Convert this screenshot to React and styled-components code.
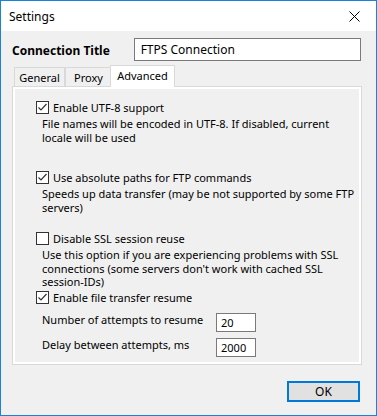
import styled, { createGlobalStyle } from "styled-components";

const GlobalStyle = createGlobalStyle`
  html, body {
    margin: 0;
    padding: 0;
    background: #ffffff;
  }
  * {
    box-sizing: border-box;
  }
`;

const font = `"Noto Sans", "Open Sans", sans-serif`;

const CheckMark = () => (
  <svg width="11" height="11" viewBox="0 0 11 11">
    <path d="M1.5 5.5 L4 8 L9.5 2" fill="none" stroke="#333" strokeWidth="1.2" />
  </svg>
);

const CloseIcon = () => (
  <svg width="11" height="11" viewBox="0 0 11 11">
    <path d="M0.5 0.5 L10.5 10.5 M10.5 0.5 L0.5 10.5" stroke="#000" strokeWidth="1" />
  </svg>
);

const Option = ({ checked, label, children, spacing }) => (
  <OptionBlock spacing={spacing}>
    <CheckRow>
      <CheckBox>{checked && <CheckMark />}</CheckBox>
      <span>{label}</span>
    </CheckRow>
    {children && <Desc>{children}</Desc>}
  </OptionBlock>
);

const App = () => {
  return (
    <>
      <GlobalStyle />
      <Window>
        <TitleBar>
          <Title>Settings</Title>
          <CloseButton>
            <CloseIcon />
          </CloseButton>
        </TitleBar>
        <Body>
          <HeaderRow>
            <HeaderLabel>Connection Title</HeaderLabel>
            <TitleInput defaultValue="FTPS Connection" />
          </HeaderRow>
          <Tabs>
            <Tab w={51}>General</Tab>
            <Tab w={47}>Proxy</Tab>
            <Tab w={65} active>
              Advanced
            </Tab>
          </Tabs>
          <Panel>
            <Option checked label="Enable UTF-8 support" spacing={0}>
              File names will be encoded in UTF-8. If disabled, current
              <br />
              locale will be used
            </Option>
            <Option checked label="Use absolute paths for FTP commands" spacing={26}>
              Speeds up data transfer (may be not supported by some FTP
              <br />
              servers)
            </Option>
            <Option label="Disable SSL session reuse" spacing={17}>
              Use this option if you are experiencing problems with SSL
              <br />
              connections (some servers don't work with cached SSL
              <br />
              session-IDs)
            </Option>
            <Option checked label="Enable file transfer resume" spacing={2} />
            <FieldRow spacing={8}>
              <FieldLabel>Number of attempts to resume</FieldLabel>
              <SmallInput defaultValue="20" />
            </FieldRow>
            <FieldRow spacing={6}>
              <FieldLabel>Delay between attempts, ms</FieldLabel>
              <SmallInput defaultValue="2000" />
            </FieldRow>
          </Panel>
          <Footer>
            <OkButton>OK</OkButton>
          </Footer>
        </Body>
      </Window>
    </>
  );
};

const Window = styled.div`
  width: 377px;
  height: 416px;
  border: 1px solid #1883d7;
  background: #f0f0f0;
  display: flex;
  flex-direction: column;
  font-family: ${font};
  font-size: 11px;
  color: #000;
`;

const TitleBar = styled.div`
  height: 30px;
  background: #ffffff;
  display: flex;
  align-items: center;
  padding-left: 8px;
`;

const Title = styled.div`
  font-size: 12px;
`;

const CloseButton = styled.div`
  margin-left: auto;
  width: 46px;
  height: 30px;
  display: flex;
  align-items: center;
  justify-content: center;
  padding-left: 2px;
`;

const Body = styled.div`
  flex: 1;
  padding: 7px 15px 0 11px;
  display: flex;
  flex-direction: column;
`;

const HeaderRow = styled.div`
  display: flex;
  align-items: center;
  height: 23px;
`;

const HeaderLabel = styled.div`
  width: 122px;
  font-weight: bold;
  font-size: 12px;
  padding-top: 2px;
`;

const TitleInput = styled.input`
  width: 228px;
  height: 23px;
  border: 1px solid #7a7a7a;
  background: #fff;
  padding: 0 6px;
  font-family: ${font};
  font-size: 12px;
  color: #000;
  outline: none;
`;

const Tabs = styled.div`
  display: flex;
  align-items: flex-end;
  height: 22px;
  margin-top: 4px;
  padding-left: 2px;
  margin-bottom: -1px;
  position: relative;
  z-index: 1;
`;

const Tab = styled.div`
  width: ${(p) => p.w}px;
  height: ${(p) => (p.active ? 22 : 20)}px;
  margin-left: ${(p) => (p.active ? -2 : 0)}px;
  border: 1px solid #d9d9d9;
  border-bottom: ${(p) => (p.active ? "none" : "1px solid #d9d9d9")};
  background: ${(p) => (p.active ? "#ffffff" : "#f0f0f0")};
  display: flex;
  align-items: center;
  justify-content: center;
  padding-bottom: ${(p) => (p.active ? 2 : 0)}px;
  & + & {
    border-left: ${(p) => (p.active ? "1px solid #d9d9d9" : "none")};
  }
`;

const Panel = styled.div`
  width: 350px;
  height: 279px;
  border: 1px solid #d9d9d9;
  box-shadow: inset 0 0 0 2px #ffffff;
  background: #f0f0f0;
  padding: 13px 16px 9px 23px;
  display: flex;
  flex-direction: column;
`;

const OptionBlock = styled.div`
  margin-top: ${(p) => p.spacing}px;
`;

const CheckRow = styled.div`
  display: flex;
  align-items: center;
  height: 14px;
  gap: 4px;
  white-space: nowrap;
`;

const CheckBox = styled.div`
  width: 13px;
  height: 13px;
  border: 1px solid #333;
  background: #fff;
  display: flex;
  align-items: center;
  justify-content: center;
`;

const Desc = styled.div`
  margin-top: 3px;
  padding-left: 6px;
  line-height: 13.5px;
  white-space: nowrap;
`;

const FieldRow = styled.div`
  display: flex;
  align-items: flex-start;
  margin-top: ${(p) => p.spacing}px;
  padding-left: 6px;
`;

const FieldLabel = styled.div`
  width: 174px;
  line-height: 14px;
`;

const SmallInput = styled.input`
  width: 40px;
  height: 19px;
  border: 1px solid #7a7a7a;
  background: #fff;
  padding: 0 4px;
  font-family: ${font};
  font-size: 11px;
  color: #000;
  outline: none;
`;

const Footer = styled.div`
  display: flex;
  justify-content: flex-end;
  padding-top: 16px;
`;

const OkButton = styled.button`
  width: 73px;
  height: 21px;
  border: 2px solid #0078d7;
  background: #e1e1e1;
  font-family: ${font};
  font-size: 12px;
  color: #000;
  padding: 0;
  margin-right: 1px;
`;

export default App;
